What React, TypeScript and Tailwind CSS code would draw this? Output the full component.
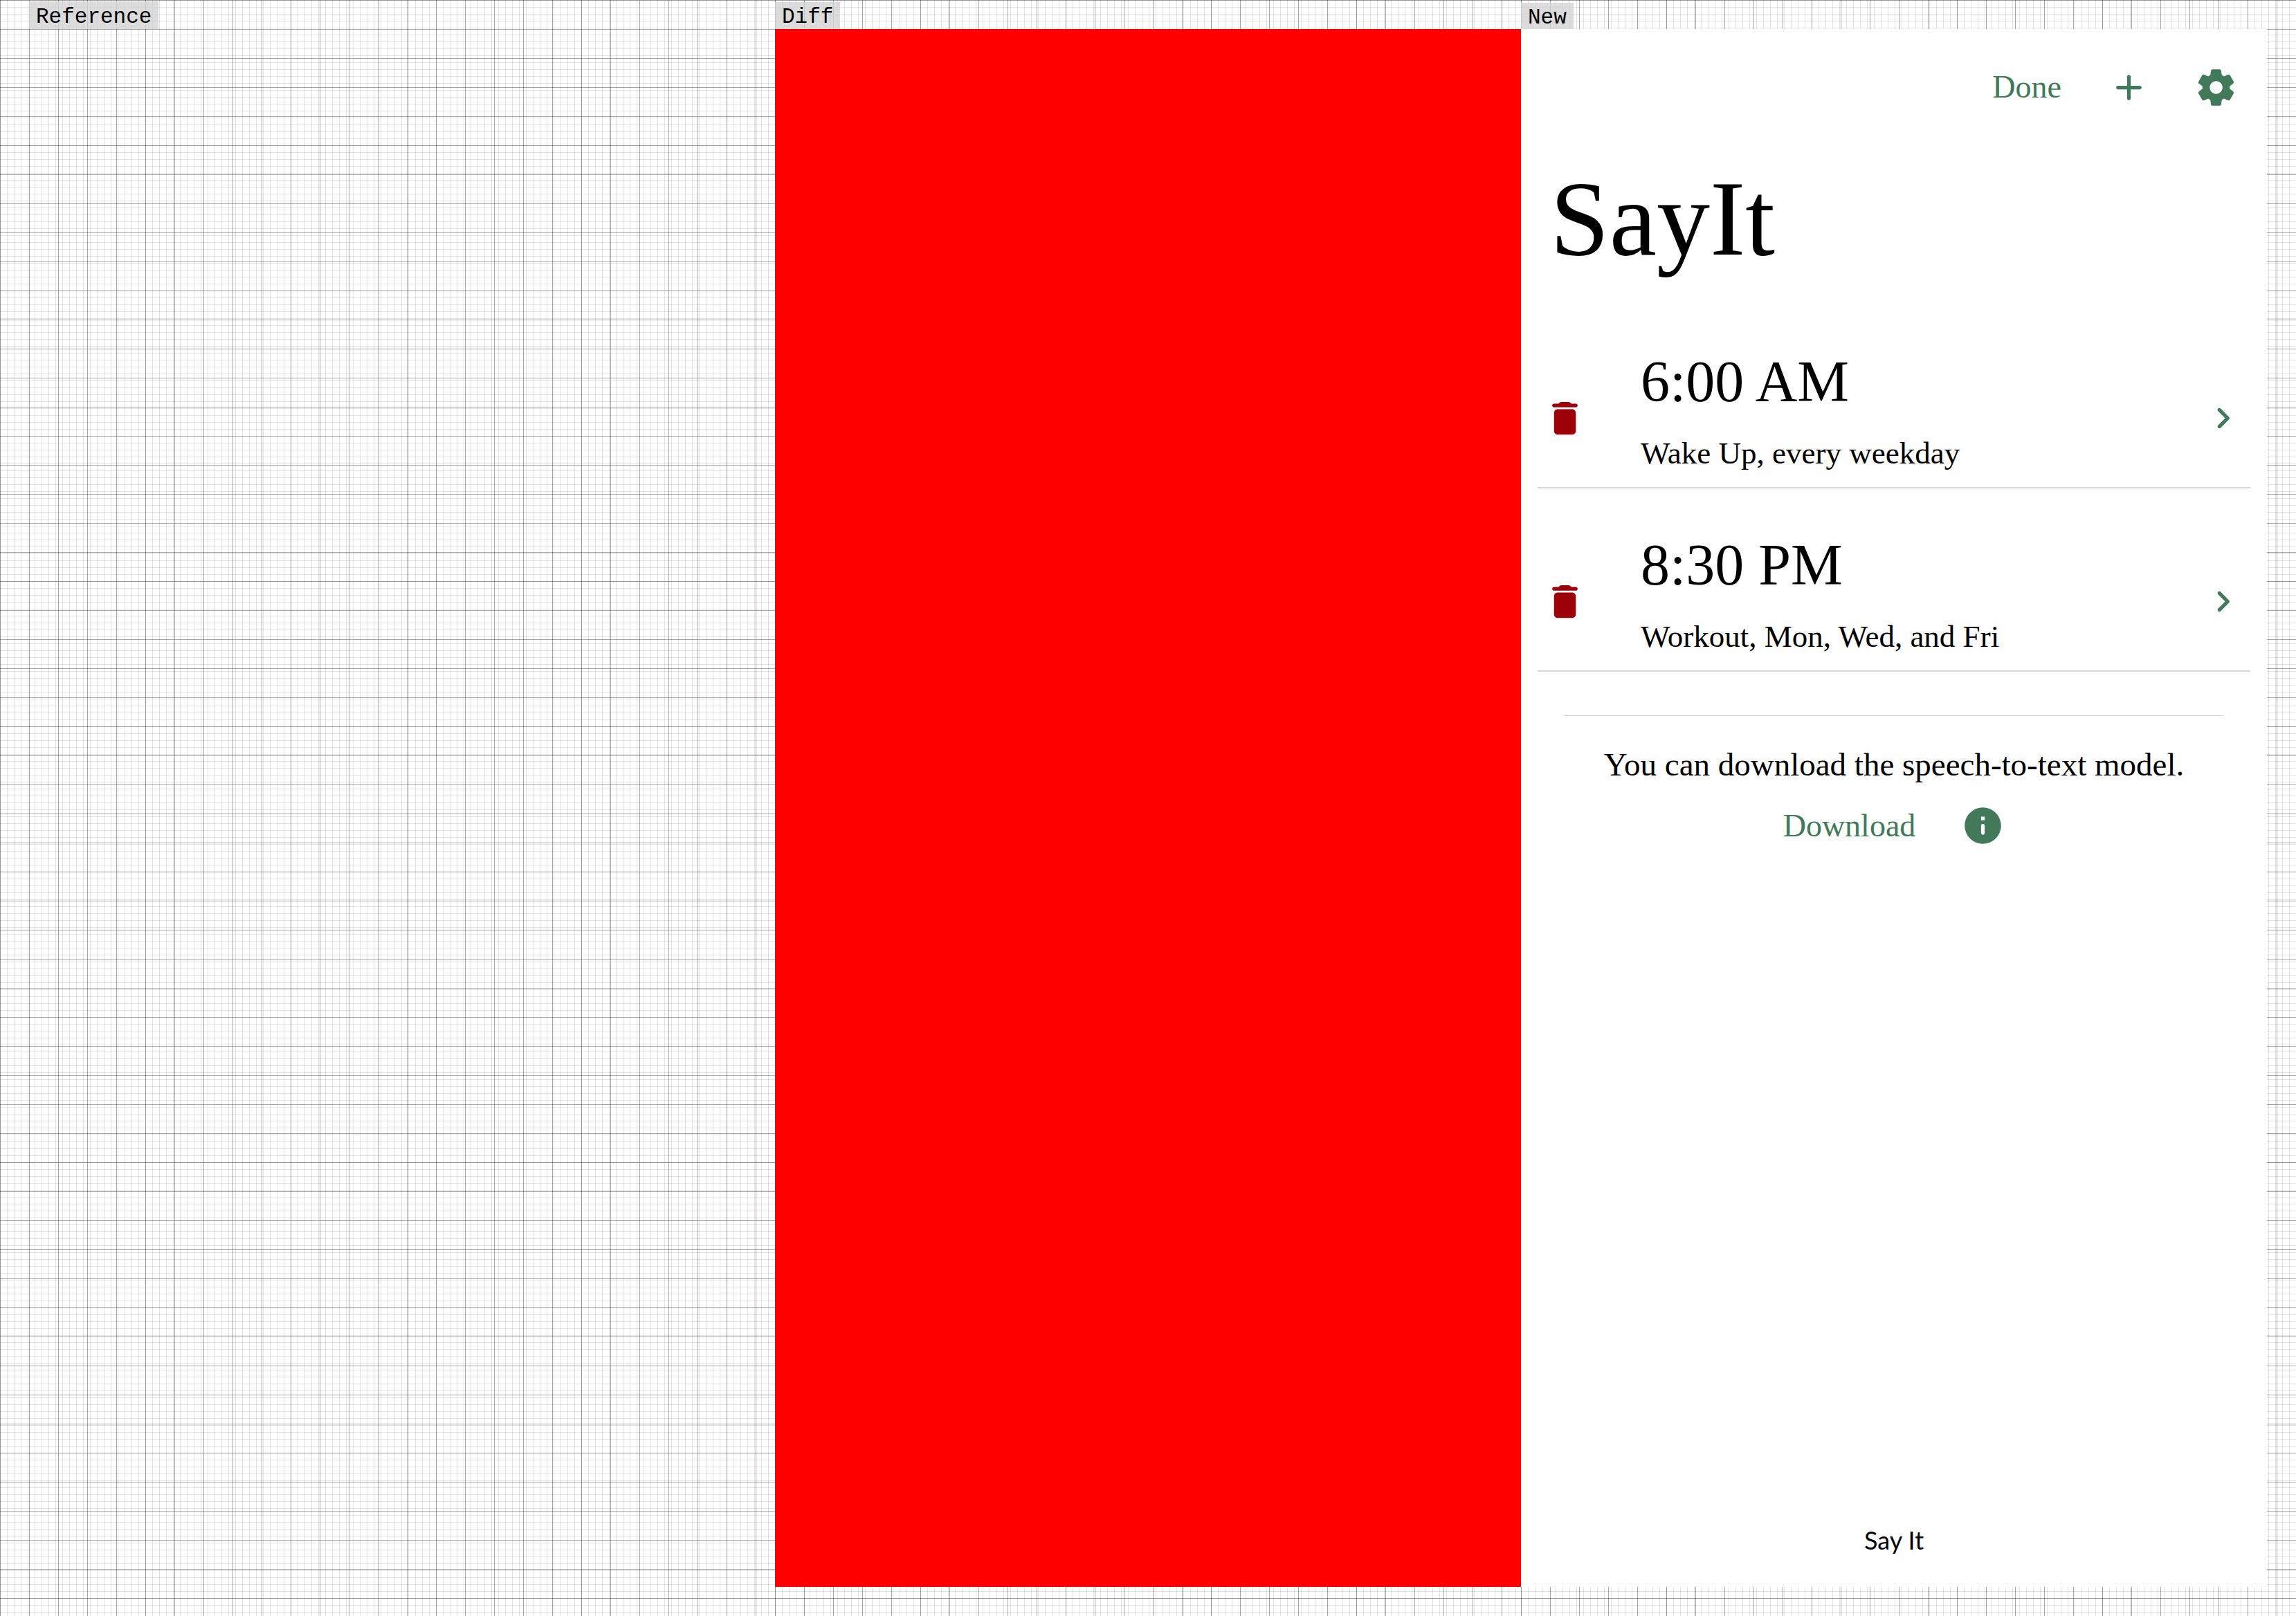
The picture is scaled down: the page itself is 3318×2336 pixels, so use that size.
import React from "react";

const GRID =
  "bg-white bg-[linear-gradient(to_right,rgba(60,60,60,0.45)_1px,transparent_1px),linear-gradient(to_bottom,rgba(60,60,60,0.45)_1px,transparent_1px),linear-gradient(to_right,rgba(100,100,100,0.18)_1px,transparent_1px),linear-gradient(to_bottom,rgba(100,100,100,0.18)_1px,transparent_1px)] bg-[size:42px_42px,42px_42px,10px_10px,10px_10px]";

const DELETE_PATH =
  "M6 19c0 1.1.9 2 2 2h8c1.1 0 2-.9 2-2V9c0-1.1-.9-2-2-2H8c-1.1 0-2 .9-2 2v10zM18 4h-2.5l-.71-.71c-.18-.18-.44-.29-.7-.29H9.91c-.26 0-.52.11-.7.29L8.5 4H6c-.55 0-1 .45-1 1s.45 1 1 1h12c.55 0 1-.45 1-1s-.45-1-1-1z";
const CHEVRON_PATH =
  "M9.29 6.71c-.39.39-.39 1.02 0 1.41L13.17 12l-3.88 3.88c-.39.39-.39 1.02 0 1.41.39.39 1.02.39 1.41 0l4.59-4.59c.39-.39.39-1.02 0-1.41L10.7 6.7c-.38-.38-1.02-.38-1.41.01z";
const ADD_PATH =
  "M18 13h-5v5c0 .55-.45 1-1 1s-1-.45-1-1v-5H6c-.55 0-1-.45-1-1s.45-1 1-1h5V6c0-.55.45-1 1-1s1 .45 1 1v5h5c.55 0 1 .45 1 1s-.45 1-1 1z";
const INFO_PATH =
  "M12 2C6.48 2 2 6.48 2 12s4.48 10 10 10 10-4.48 10-10S17.52 2 12 2zm0 15c-.55 0-1-.45-1-1v-4c0-.55.45-1 1-1s1 .45 1 1v4c0 .55-.45 1-1 1zm1-8h-2V7h2v2z";
const SETTINGS_PATH =
  "M19.5 12c0-.23-.01-.45-.03-.68l1.86-1.41c.4-.3.51-.86.26-1.3l-1.87-3.23c-.25-.44-.79-.62-1.25-.42l-2.15.91c-.37-.26-.76-.49-1.17-.68l-.29-2.31C14.8 2.38 14.37 2 13.87 2h-3.73c-.51 0-.94.38-1 .88l-.29 2.31c-.41.19-.8.42-1.17.68l-2.15-.91c-.46-.2-1-.02-1.25.42L2.41 8.62c-.25.44-.14.99.26 1.3l1.86 1.41c-.02.22-.03.44-.03.67s.01.45.03.68l-1.86 1.41c-.4.3-.51.86-.26 1.3l1.87 3.23c.25.44.79.62 1.25.42l2.15-.91c.37.26.76.49 1.17.68l.29 2.31c.06.5.49.88.99.88h3.73c.5 0 .93-.38.99-.88l.29-2.31c.41-.19.8-.42 1.17-.68l2.15.91c.46.2 1 .02 1.25-.42l1.87-3.23c.25-.44.14-.99-.26-1.3l-1.86-1.41c.03-.23.04-.45.04-.68zm-7.46 3.5c-1.93 0-3.5-1.57-3.5-3.5s1.57-3.5 3.5-3.5 3.5 1.57 3.5 3.5-1.57 3.5-3.5 3.5z";

function Icon({ path }: { path: string }) {
  return (
    <svg viewBox="0 0 24 24" className="size-[63px] shrink-0 fill-current" aria-hidden="true">
      <path d={path} />
    </svg>
  );
}

function Label({ children, height }: { children: string; height: string }) {
  return (
    <div className="flex h-[42px] shrink-0 items-end">
      <h2
        className={
          "flex items-center bg-[rgba(211,211,211,0.8)] px-2.5 pt-1 font-['Courier_New','Liberation_Mono',monospace] text-[31px] leading-none text-black " +
          height
        }
      >
        {children}
      </h2>
    </div>
  );
}

function AlarmRow({ time, detail }: { time: string; detail: string }) {
  return (
    <li className="flex border-b-2 border-[#d8d8d8] px-2 pt-[63px] pb-[19px]">
      <button type="button" aria-label={"Delete " + time} className="flex items-center pt-5 text-[#9c0008]">
        <Icon path={DELETE_PATH} />
      </button>
      <div className="ml-[78px] flex flex-1 flex-col gap-[25px]">
        <p className="text-[84px] leading-[96px]">{time}</p>
        <p className="text-[45px] leading-[60px]">{detail}</p>
      </div>
      <button type="button" aria-label={"Open " + time} className="flex items-center pt-5 text-[#42795a]">
        <Icon path={CHEVRON_PATH} />
      </button>
    </li>
  );
}

function SayItScreen() {
  return (
    <main className="flex flex-1 flex-col bg-[#fefefe] font-['Liberation_Serif','Times_New_Roman',serif] text-black">
      <header className="flex items-center justify-end pt-[21px] pr-[11px] text-[#42795a]">
        <button type="button" className="px-[34px] text-[46px] leading-[60px]">
          Done
        </button>
        <button type="button" aria-label="Add" className="flex size-[126px] items-center justify-center">
          <Icon path={ADD_PATH} />
        </button>
        <button type="button" aria-label="Settings" className="flex size-[126px] items-center justify-center">
          <Icon path={SETTINGS_PATH} />
        </button>
      </header>
      <h1 className="mt-[43px] px-[42px] text-[154px] leading-[168px]">SayIt</h1>
      <ul className="mx-6 mt-[41px]">
        <AlarmRow time="6:00 AM" detail="Wake Up, every weekday" />
        <AlarmRow time="8:30 PM" detail="Workout, Mon, Wed, and Fri" />
      </ul>
      <hr className="mx-[63px] mt-[63px] border-[#d4d4d4]" />
      <p className="mt-10 text-center text-[47px] leading-[60px]">You can download the speech-to-text model.</p>
      <div className="mt-[27px] flex items-center justify-center gap-[66px] text-[#42795a]">
        <button type="button" className="text-[46px] leading-[60px]">
          Download
        </button>
        <button type="button" aria-label="Information">
          <Icon path={INFO_PATH} />
        </button>
      </div>
      <footer className="mt-auto pb-12 text-center font-['Lato',sans-serif] text-[36px] leading-[40px]">
        Say It
      </footer>
    </main>
  );
}

export default function App() {
  return (
    <div className="grid min-h-screen grid-cols-[1120fr_1078fr_1120fr]">
      <section className={"flex flex-col pb-[42px] pl-[42px] " + GRID}>
        <Label height="h-10">Reference</Label>
      </section>
      <section className={"flex flex-col pb-[42px] " + GRID}>
        <Label height="h-[39px]">Diff</Label>
        <div className="flex-1 bg-[#ff0000]" />
      </section>
      <section className={"flex flex-col pr-[42px] pb-[42px] " + GRID}>
        <Label height="h-[38px]">New</Label>
        <SayItScreen />
      </section>
    </div>
  );
}
